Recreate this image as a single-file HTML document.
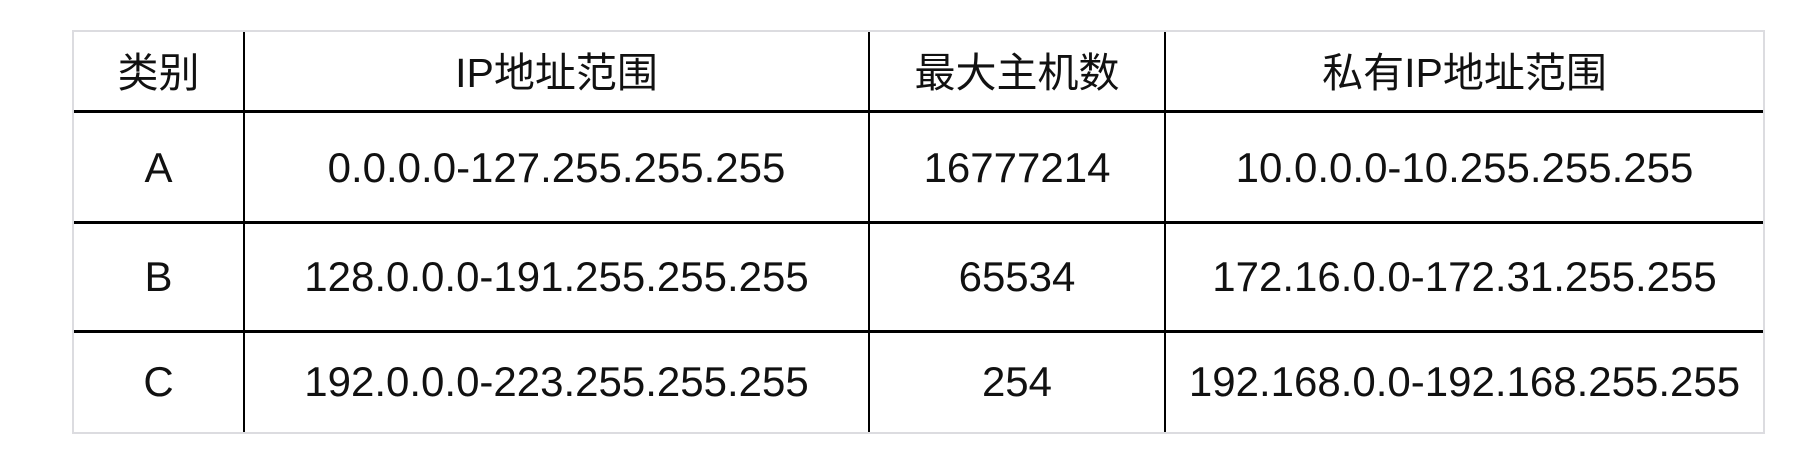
<!DOCTYPE html>
<html><head><meta charset="utf-8"><style>
body{margin:0;width:1808px;height:454px;background:#fff;position:relative;overflow:hidden;font-family:"Liberation Sans","Noto Sans CJK SC",sans-serif;color:#111}
.b{position:absolute;background:#000}
.o{position:absolute;left:72px;top:30px;width:1689px;height:400px;border:2px solid #dcdce0}
.t{position:absolute;font-size:42px;line-height:50px;text-align:center;white-space:nowrap}
.h{font-size:41px}
</style></head><body>
<div class="o"></div>
<div class="b" style="left:243px;top:32px;width:2px;height:400px"></div>
<div class="b" style="left:868px;top:32px;width:2px;height:400px"></div>
<div class="b" style="left:1164px;top:32px;width:2px;height:400px"></div>
<div class="b" style="left:74px;top:110px;width:1689px;height:3px"></div>
<div class="b" style="left:74px;top:221px;width:1689px;height:3px"></div>
<div class="b" style="left:74px;top:330px;width:1689px;height:3px"></div>

<div class="t h" style="left:74px;width:169px;top:48px">类别</div>
<div class="t h" style="left:245px;width:623px;top:48px">IP地址范围</div>
<div class="t h" style="left:870px;width:294px;top:48px">最大主机数</div>
<div class="t h" style="left:1166px;width:597px;top:48px">私有IP地址范围</div>

<div class="t" style="left:74px;width:169px;top:143px">A</div>
<div class="t" style="left:245px;width:623px;top:143px">0.0.0.0-127.255.255.255</div>
<div class="t" style="left:870px;width:294px;top:143px">16777214</div>
<div class="t" style="left:1166px;width:597px;top:143px">10.0.0.0-10.255.255.255</div>

<div class="t" style="left:74px;width:169px;top:252px">B</div>
<div class="t" style="left:245px;width:623px;top:252px">128.0.0.0-191.255.255.255</div>
<div class="t" style="left:870px;width:294px;top:252px">65534</div>
<div class="t" style="left:1166px;width:597px;top:252px">172.16.0.0-172.31.255.255</div>

<div class="t" style="left:74px;width:169px;top:357px">C</div>
<div class="t" style="left:245px;width:623px;top:357px">192.0.0.0-223.255.255.255</div>
<div class="t" style="left:870px;width:294px;top:357px">254</div>
<div class="t" style="left:1166px;width:597px;top:357px">192.168.0.0-192.168.255.255</div>
</body></html>
